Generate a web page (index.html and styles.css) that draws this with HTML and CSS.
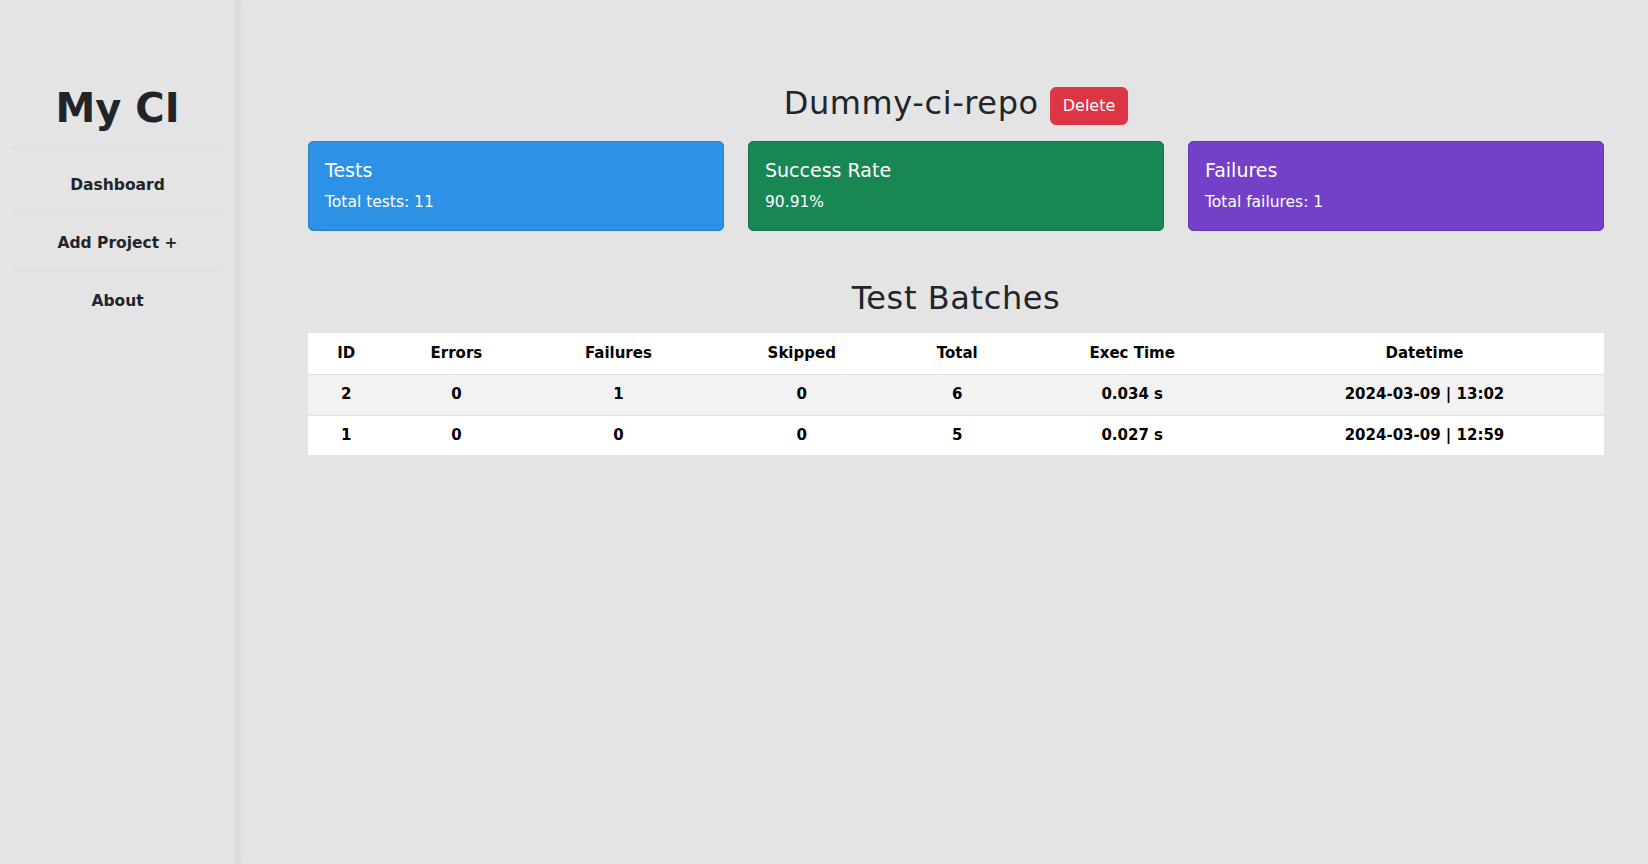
FILE: index.html
```html
<!DOCTYPE html>
<html>
<head>
<meta charset="utf-8">
<link rel="stylesheet" href="styles.css">
</head>
<body>
<div class="layout">
  <aside class="sidebar">
    <h1 class="brand">My CI</h1>
    <nav class="nav">
      <a class="nav-link first" href="#">Dashboard</a>
      <a class="nav-link" href="#">Add Project +</a>
      <a class="nav-link last" href="#">About</a>
    </nav>
  </aside>
  <main class="main">
    <div class="title-row">
      <h2 class="title">Dummy-ci-repo</h2>
      <button class="btn-delete">Delete</button>
    </div>
    <div class="cards">
      <div class="card card-blue">
        <h5 class="card-title">Tests</h5>
        <p class="card-text">Total tests: 11</p>
      </div>
      <div class="card card-green">
        <h5 class="card-title">Success Rate</h5>
        <p class="card-text">90.91%</p>
      </div>
      <div class="card card-purple">
        <h5 class="card-title">Failures</h5>
        <p class="card-text">Total failures: 1</p>
      </div>
    </div>
    <h2 class="section-title">Test Batches</h2>
    <table class="batches">
      <thead>
        <tr>
          <th class="c-id">ID</th>
          <th class="c-err">Errors</th>
          <th class="c-fail">Failures</th>
          <th class="c-skip">Skipped</th>
          <th class="c-tot">Total</th>
          <th class="c-exec">Exec Time</th>
          <th class="c-date">Datetime</th>
        </tr>
      </thead>
      <tbody>
        <tr class="striped">
          <td>2</td><td>0</td><td>1</td><td>0</td><td>6</td><td>0.034 s</td><td>2024-03-09 | 13:02</td>
        </tr>
        <tr>
          <td>1</td><td>0</td><td>0</td><td>0</td><td>5</td><td>0.027 s</td><td>2024-03-09 | 12:59</td>
        </tr>
      </tbody>
    </table>
  </main>
</div>
</body>
</html>
```
FILE: styles.css
```css
* { box-sizing: border-box; }
html, body { margin: 0; padding: 0; }
body {
  background: #e4e4e4;
  font-family: "DejaVu Sans", "Open Sans", sans-serif;
  color: #212529;
  font-size: 16px;
  line-height: 1.5;
}
.layout {
  display: flex;
  min-height: 864px;
}
.sidebar {
  width: 236px;
  flex: none;
  background: #e4e4e4;
  box-shadow: 3px 0 6px rgba(0,0,0,0.06);
  border-right: 1px solid #dcdcdc;
  padding: 0 12px;
  display: flex;
  flex-direction: column;
  align-items: stretch;
}
.brand {
  margin: 78px 0 0;
  height: 71px;
  text-align: center;
  font-size: 40px;
  font-weight: 700;
  line-height: 60px;
  color: #212529;
  border-bottom: 1px solid #dcdde0;
}
.nav { display: flex; flex-direction: column; }
.nav-link {
  display: block;
  text-align: center;
  color: #212529;
  text-decoration: none;
  font-weight: 600;
  font-size: 15.5px;
  height: 58px;
  line-height: 58px;
  border-bottom: 1px solid #dcdde0;
}
.nav-link.first { height: 65px; line-height: 72px; }
.nav-link.last { border-bottom: none; }
.main {
  flex: 1;
  padding: 84px 44px 0 72px;
}
.title-row {
  display: flex;
  justify-content: center;
  align-items: center;
  gap: 11px;
  height: 44px;
}
.title {
  margin: 0 0 5px;
  font-size: 32px;
  font-weight: 400;
  line-height: 1.2;
  letter-spacing: 0.6px;
}
.btn-delete {
  background: #dc3545;
  color: #fff;
  border: 1px solid #dc3545;
  border-radius: 6px;
  font-family: inherit;
  font-size: 16px;
  padding: 0 12px;
  height: 38px;
  line-height: 36px;
  margin-top: 0;
}
.cards {
  display: flex;
  gap: 24px;
  margin-top: 13px;
}
.card {
  flex: 1;
  height: 90px;
  border-radius: 5px;
  padding: 17px 16px 0;
  color: #fff;
}
.card-blue { background: #2d91e5; border: 1px solid #2a80cc; }
.card-green { background: #198754; border: 1px solid #157347; }
.card-purple { background: #7540c8; border: 1px solid #6636b4; }
.card-title {
  margin: 0 0 9px;
  font-size: 19px;
  font-weight: 400;
  line-height: 1.2;
}
.card-text {
  margin: 0;
  font-size: 15.5px;
  font-weight: 400;
  color: #fff;
}
.section-title {
  margin: 48px 0 0;
  text-align: center;
  font-size: 32px;
  font-weight: 400;
  line-height: 1.2;
  letter-spacing: 0.6px;
  height: 54px;
}
.batches {
  width: 100%;
  border-collapse: collapse;
  table-layout: fixed;
  background: #fff;
}
.batches th, .batches td {
  text-align: center;
  padding: 8px;
  height: 41px;
  font-size: 15px;
  font-weight: 700;
  color: #000;
  border-bottom: 1px solid #dee2e6;
}
.batches tbody tr:last-child td { border-bottom: none; height: 40px; }
.batches tr.striped td { background: #f2f2f2; }
.c-id { width: 5.9%; }
.c-err { width: 11.1%; }
.c-fail { width: 13.9%; }
.c-skip { width: 14.4%; }
.c-tot { width: 9.6%; }
.c-exec { width: 17.4%; }
.c-date { width: 27.7%; }
```
